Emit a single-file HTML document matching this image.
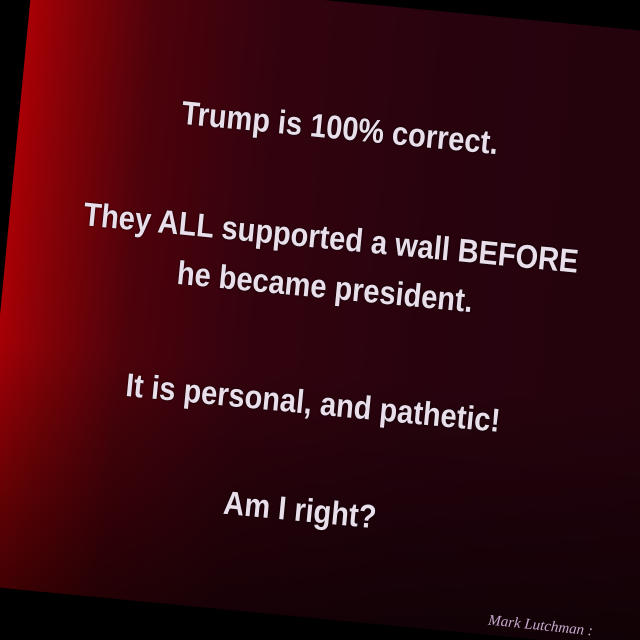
<!DOCTYPE html>
<html><head><style>
html,body{margin:0;padding:0;width:640px;height:640px;overflow:hidden;background:#000;}
.wrap{position:absolute;left:0;top:0;width:640px;height:640px;overflow:hidden;background:#000;}
.card{position:absolute;left:33px;top:-28px;width:700px;height:616px;transform:rotate(5.5deg);transform-origin:0 0;
background:linear-gradient(90deg,#a80006 0%,#800207 7%,#4e020b 18%,#33030e 35%,#28030e 60%,#22030c 100%);}
.shade{position:absolute;left:0;top:0;width:100%;height:100%;background:linear-gradient(180deg,rgba(0,0,0,0) 0%,rgba(0,0,0,0) 60%,rgba(0,0,0,0.55) 100%);}
.t{position:absolute;white-space:nowrap;font-family:"Liberation Sans",sans-serif;font-weight:bold;font-size:33px;color:#e8dfea;text-shadow:0 0 2px #000;}
.sig{position:absolute;left:488px;top:618px;font-family:"Liberation Serif",serif;font-style:italic;font-size:15px;color:#c9a9d0;transform:rotate(6deg);white-space:nowrap;}
</style></head><body>
<div class="wrap">
<div class="card"><div class="shade"></div></div>
<div class="t" style="left:340px;top:128px;transform:translate(-50%,-50%) rotate(5.5deg) scaleX(0.88)">Trump is 100% correct.</div>
<div class="t" style="left:331px;top:238px;transform:translate(-50%,-50%) rotate(5.5deg) scaleX(0.88)">They ALL supported a wall BEFORE</div>
<div class="t" style="left:325px;top:287px;transform:translate(-50%,-50%) rotate(5.5deg) scaleX(0.88)">he became president.</div>
<div class="t" style="left:313px;top:403px;transform:translate(-50%,-50%) rotate(5.5deg) scaleX(0.88)">It is personal, and pathetic!</div>
<div class="t" style="left:300px;top:510px;transform:translate(-50%,-50%) rotate(5.5deg) scaleX(0.88)">Am I right?</div>
<div class="sig">Mark Lutchman :</div>
</div>
</body></html>
